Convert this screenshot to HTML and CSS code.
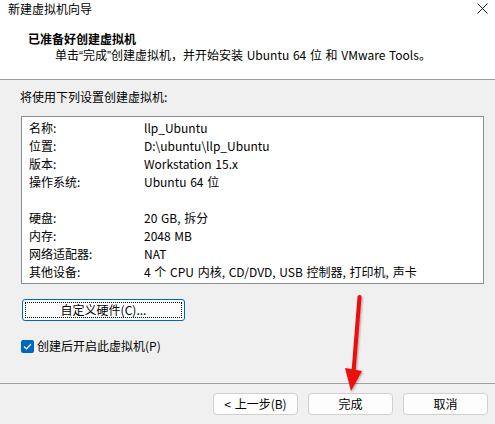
FILE: index.html
```html
<!DOCTYPE html>
<html lang="zh-CN">
<head>
<meta charset="utf-8">
<title>新建虚拟机向导</title>
<link rel="stylesheet" href="styles.css">
</head>
<body>
<div class="window">
  <header class="header">
    <div class="titlebar">
      <span class="title">新建虚拟机向导</span>
      <svg class="close" width="11" height="11" viewBox="0 0 11 11"><path d="M0.5 0.5 L10.5 10.5 M10.5 0.5 L0.5 10.5" stroke="#1a1a1a" stroke-width="1" fill="none"/></svg>
    </div>
    <div class="heading">已准备好创建虚拟机</div>
    <div class="subtitle">单击<span class="q">“</span>完成<span class="q">”</span>创建虚拟机，并开始安装 Ubuntu 64 位 和 VMware Tools。</div>
  </header>
  <main class="content">
    <div class="intro">将使用下列设置创建虚拟机:</div>
    <div class="listbox">
      <div class="row"><span class="label">名称:</span><span>llp_Ubuntu</span></div>
      <div class="row"><span class="label">位置:</span><span>D:\ubuntu\llp_Ubuntu</span></div>
      <div class="row"><span class="label">版本:</span><span>Workstation 15.x</span></div>
      <div class="row"><span class="label">操作系统:</span><span>Ubuntu 64 位</span></div>
      <div class="row"></div>
      <div class="row"><span class="label">硬盘:</span><span>20 GB, 拆分</span></div>
      <div class="row"><span class="label">内存:</span><span>2048 MB</span></div>
      <div class="row"><span class="label">网络适配器:</span><span>NAT</span></div>
      <div class="row"><span class="label">其他设备:</span><span>4 个 CPU 内核, CD/DVD, USB 控制器, 打印机, 声卡</span></div>
    </div>
    <button class="custom"><span class="focus">自定义硬件(C)...</span></button>
    <label class="check">
      <span class="box"><svg width="9" height="7" viewBox="0 0 9 7"><path d="M1 3.5 L3.5 6 L8 1" stroke="#fff" stroke-width="1.2" fill="none"/></svg></span>
      <span>创建后开启此虚拟机(P)</span>
    </label>
  </main>
  <footer class="footer">
    <button class="btn">&lt; 上一步(B)</button>
    <button class="btn">完成</button>
    <button class="btn">取消</button>
  </footer>
  <svg class="arrow" width="495" height="424" viewBox="0 0 495 424">
    <defs>
      <filter id="sh" x="-20%" y="-20%" width="140%" height="140%">
        <feGaussianBlur in="SourceAlpha" stdDeviation="1.2"/>
        <feOffset dx="1" dy="1" result="b"/>
        <feComponentTransfer><feFuncA type="linear" slope="0.35"/></feComponentTransfer>
        <feMerge><feMergeNode/><feMergeNode in="SourceGraphic"/></feMerge>
      </filter>
    </defs>
    <g filter="url(#sh)">
      <path d="M359.5 297 L353.5 372" stroke="#ee1111" stroke-width="4" stroke-linecap="round" fill="none"/>
      <polygon points="345,368 362,371 351,391" fill="#ee1111"/>
    </g>
  </svg>
</div>
</body>
</html>
```
FILE: styles.css
```css
* { box-sizing: border-box; }
html, body {
  margin: 0;
  padding: 0;
}
body {
  width: 495px;
  height: 424px;
  background: #f0f0f0;
  font-family: "Noto Sans CJK SC", "Noto Sans", "Liberation Sans", sans-serif;
  font-size: 12px;
  word-spacing: 1px;
  color: #000;
  overflow: hidden;
}
.window {
  position: relative;
  width: 495px;
  height: 424px;
  display: flex;
  flex-direction: column;
}
.header {
  background: #fff;
  height: 80px;
  border-bottom: 1px solid #a0a0a0;
}
.titlebar {
  display: flex;
  justify-content: space-between;
  align-items: flex-start;
  height: 17px;
  padding: 1px 8px 0 8px;
  line-height: 16px;
}
.close {
  margin-top: 2px;
  margin-right: -1px;
}
.heading {
  margin-top: 14px;
  padding-left: 28px;
  font-weight: bold;
  line-height: 16px;
}
.subtitle {
  padding-left: 55px;
  line-height: 16px;
}
.q {
  font-family: "Liberation Sans", sans-serif;
}
.content {
  height: 304px;
  padding: 9px 0 0 0;
  display: flex;
  flex-direction: column;
  align-items: flex-start;
  border-bottom: 1px solid #a0a0a0;
}
.intro {
  padding-left: 20px;
  line-height: 16px;
}
.listbox {
  margin: 11px 0 0 21px;
  width: 463px;
  height: 168px;
  background: #fff;
  border: 1px solid #898d94;
  padding: 2px 0 0 7px;
}
.row {
  display: flex;
  height: 18px;
  line-height: 18px;
  white-space: nowrap;
}
.label {
  width: 115px;
  flex: none;
}
.custom {
  margin: 15px 0 0 22px;
  width: 163px;
  height: 22px;
  padding: 2px;
  border: 1px solid #0067c0;
  border-radius: 3px;
  background: #fdfdfd;
  font: inherit;
  word-spacing: inherit;
  color: #000;
  display: flex;
}
.focus {
  flex: 1;
  border: 1px dotted #000;
  line-height: 14px;
  text-align: center;
}
.check {
  margin: 18px 0 0 21px;
  display: flex;
  align-items: center;
  gap: 3px;
  line-height: 14px;
}
.box {
  width: 13px;
  height: 13px;
  border-radius: 2px;
  background: #0067c0;
  display: flex;
  align-items: center;
  justify-content: center;
}
.footer {
  flex: 1;
  display: flex;
  justify-content: flex-end;
  align-items: flex-start;
  gap: 10px;
  padding: 9px 7px 0 0;
}
.btn {
  width: 85px;
  height: 22px;
  border: 1px solid #d0d0d0;
  border-radius: 4px;
  background: #fdfdfd;
  font: inherit;
  word-spacing: inherit;
  color: #000;
  padding: 0;
  line-height: 20px;
}
.arrow {
  position: absolute;
  left: 0;
  top: 0;
  pointer-events: none;
}
```
